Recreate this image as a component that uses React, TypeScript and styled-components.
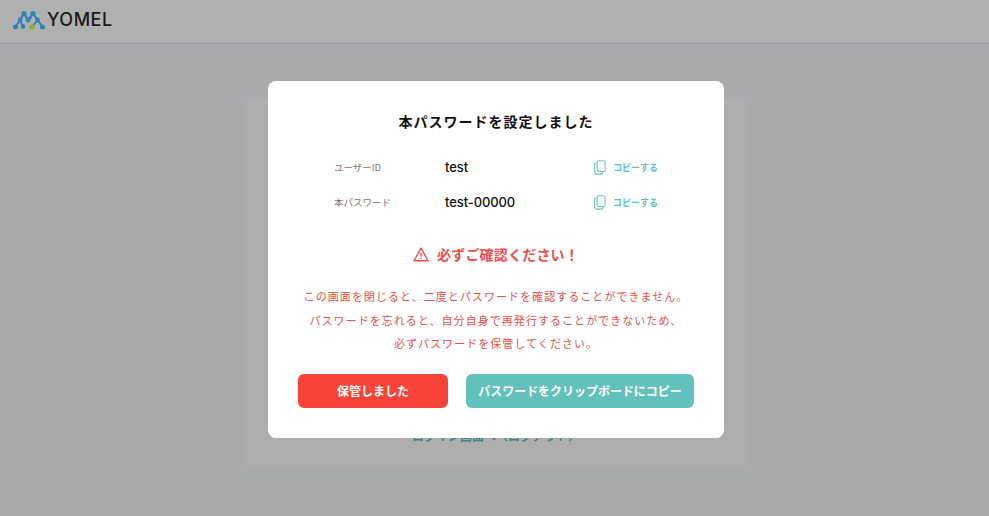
import React from "react";
import styled, { createGlobalStyle } from "styled-components";

const GlobalStyle = createGlobalStyle`
  html, body {
    margin: 0;
    padding: 0;
    height: 100%;
    background: #a9aaae;
    font-family: "Noto Sans CJK JP", "Noto Sans", sans-serif;
  }
`;

const Page = styled.div`
  position: relative;
  width: 989px;
  height: 516px;
  overflow: hidden;
  background: #a9aaae;
`;

const Header = styled.header`
  display: flex;
  align-items: center;
  height: 44px;
  padding: 0 0 4px 13px;
  box-sizing: border-box;
  gap: 2px;
  background: #b0b0b0;
  border-bottom: 1px solid #9c9c9c;
`;

const LogoText = styled.span`
  font-family: Inter, "Liberation Sans", sans-serif;
  font-size: 18px;
  font-weight: 500;
  letter-spacing: 0.5px;
  color: #1a1a1a;
`;

const BackCard = styled.div`
  display: flex;
  flex-direction: column;
  justify-content: flex-end;
  align-items: center;
  width: 504px;
  height: 369px;
  margin: 55px 0 0 244px;
  padding-bottom: 24px;
  box-sizing: border-box;
  border-radius: 8px;
  background: #aeaeae;
`;

const BackLink = styled.span`
  font-size: 12px;
  font-weight: 700;
  color: #4a8280;
`;

const Overlay = styled.div`
  position: absolute;
  top: 81px;
  left: 268px;
`;

const Modal = styled.div`
  display: flex;
  flex-direction: column;
  align-items: center;
  width: 456px;
  height: 357px;
  padding-top: 29px;
  box-sizing: border-box;
  border-radius: 8px;
  background: #fff;
`;

const Title = styled.h2`
  margin: 0;
  font-size: 14px;
  line-height: 22px;
  font-weight: 700;
  letter-spacing: 1px;
  color: #111;
`;

const InfoList = styled.div`
  display: flex;
  flex-direction: column;
  gap: 15px;
  width: 100%;
  margin-top: 25px;
`;

const InfoRow = styled.div`
  display: grid;
  grid-template-columns: 177px 148px auto;
  align-items: center;
  height: 20px;
`;

const InfoLabel = styled.span`
  padding-left: 66px;
  font-size: 9.5px;
  color: #777;
`;

const InfoValue = styled.span`
  font-family: Inter, "Noto Sans", sans-serif;
  font-size: 13px;
  font-weight: 500;
  letter-spacing: -0.1px;
  color: #111;
`;

const CopyLink = styled.span`
  display: flex;
  align-items: center;
  gap: 7px;
  padding-left: 1px;
  font-size: 9px;
  font-weight: 700;
  color: #62c1bb;
`;

const Warning = styled.div`
  display: flex;
  align-items: center;
  gap: 8px;
  margin-top: 31px;
  font-size: 14px;
  line-height: 22px;
  font-weight: 700;
  letter-spacing: 0.2px;
  color: #e8504a;
`;

const Notice = styled.p`
  margin: 20px 0 0;
  font-size: 11px;
  line-height: 23.5px;
  letter-spacing: 1.05px;
  text-align: center;
  color: #e8504a;
`;

const Actions = styled.div`
  display: flex;
  gap: 18px;
  margin-top: 18px;
`;

const ActionButton = styled.button<{ $tone: "red" | "teal"; $width: number }>`
  width: ${(p) => p.$width}px;
  height: 34px;
  padding: 0;
  border: none;
  border-radius: 6px;
  font-family: inherit;
  font-size: 12px;
  font-weight: 700;
  letter-spacing: -0.03px;
  color: #fff;
  background: ${(p) => (p.$tone === "red" ? "#f84438" : "#62c1bb")};
`;

const Logo = () => (
  <svg width="32" height="20" viewBox="0 0 32 20">
    <g stroke="#2f7fb0" strokeWidth="2" fill="none">
      <path d="M2.5 17 L7 10 L11 3.5 L15 10 L20 3.5 L24.5 10 L29.5 17" />
      <path d="M7 10 L10 16.5 M11 3.5 L7 10 M20 3.5 L16 10 M24.5 10 L19 17" />
    </g>
    <g fill="#2b83b8">
      <circle cx="2.5" cy="17" r="2.5" />
      <circle cx="7" cy="10" r="2.4" />
      <circle cx="11" cy="3.5" r="2.6" />
      <circle cx="20" cy="3.5" r="2.6" />
      <circle cx="24.5" cy="10" r="2.4" />
      <circle cx="29.5" cy="17" r="2.5" />
      <circle cx="15" cy="10" r="2.4" />
      <circle cx="10" cy="16.5" r="2.3" />
    </g>
    <circle cx="19" cy="17" r="2.8" fill="#8cb02f" />
  </svg>
);

const CopyIcon = () => (
  <svg width="12" height="15" viewBox="0 0 14 16" preserveAspectRatio="none" fill="none" stroke="#62c1bb" strokeWidth="1.2">
    <rect x="3.6" y="0.8" width="9.4" height="11.4" rx="2" />
    <path d="M3.6 3.2 H2.6 A1.8 1.8 0 0 0 0.8 5 V13 A2 2 0 0 0 2.8 15 H8.6 A1.8 1.8 0 0 0 10.4 13.2 V12.2" />
  </svg>
);

const AlertIcon = () => (
  <svg width="16" height="15" viewBox="0 0 16 15" fill="none" stroke="#e8504a" strokeWidth="1.4" strokeLinejoin="round">
    <path d="M8 1.2 L15 13.8 H1 Z" />
    <path d="M8 5.6 V9.8" />
    <path d="M8 11 V12" />
  </svg>
);

const rows = [
  { label: "ユーザーID", value: "test" },
  { label: "本パスワード", value: "test-00000" },
];

export default function App() {
  return (
    <Page>
      <GlobalStyle />
      <Header>
        <Logo />
        <LogoText>YOMEL</LogoText>
      </Header>
      <BackCard>
        <BackLink>ログイン画面へ（ログアウト）</BackLink>
      </BackCard>
      <Overlay>
        <Modal>
          <Title>本パスワードを設定しました</Title>
          <InfoList>
            {rows.map((row) => (
              <InfoRow key={row.label}>
                <InfoLabel>{row.label}</InfoLabel>
                <InfoValue>{row.value}</InfoValue>
                <CopyLink>
                  <CopyIcon />
                  コピーする
                </CopyLink>
              </InfoRow>
            ))}
          </InfoList>
          <Warning>
            <AlertIcon />
            必ずご確認ください！
          </Warning>
          <Notice>
            この画面を閉じると、二度とパスワードを確認することができません。
            <br />
            パスワードを忘れると、自分自身で再発行することができないため、
            <br />
            必ずパスワードを保管してください。
          </Notice>
          <Actions>
            <ActionButton $tone="red" $width={150}>保管しました</ActionButton>
            <ActionButton $tone="teal" $width={228}>パスワードをクリップボードにコピー</ActionButton>
          </Actions>
        </Modal>
      </Overlay>
    </Page>
  );
}
